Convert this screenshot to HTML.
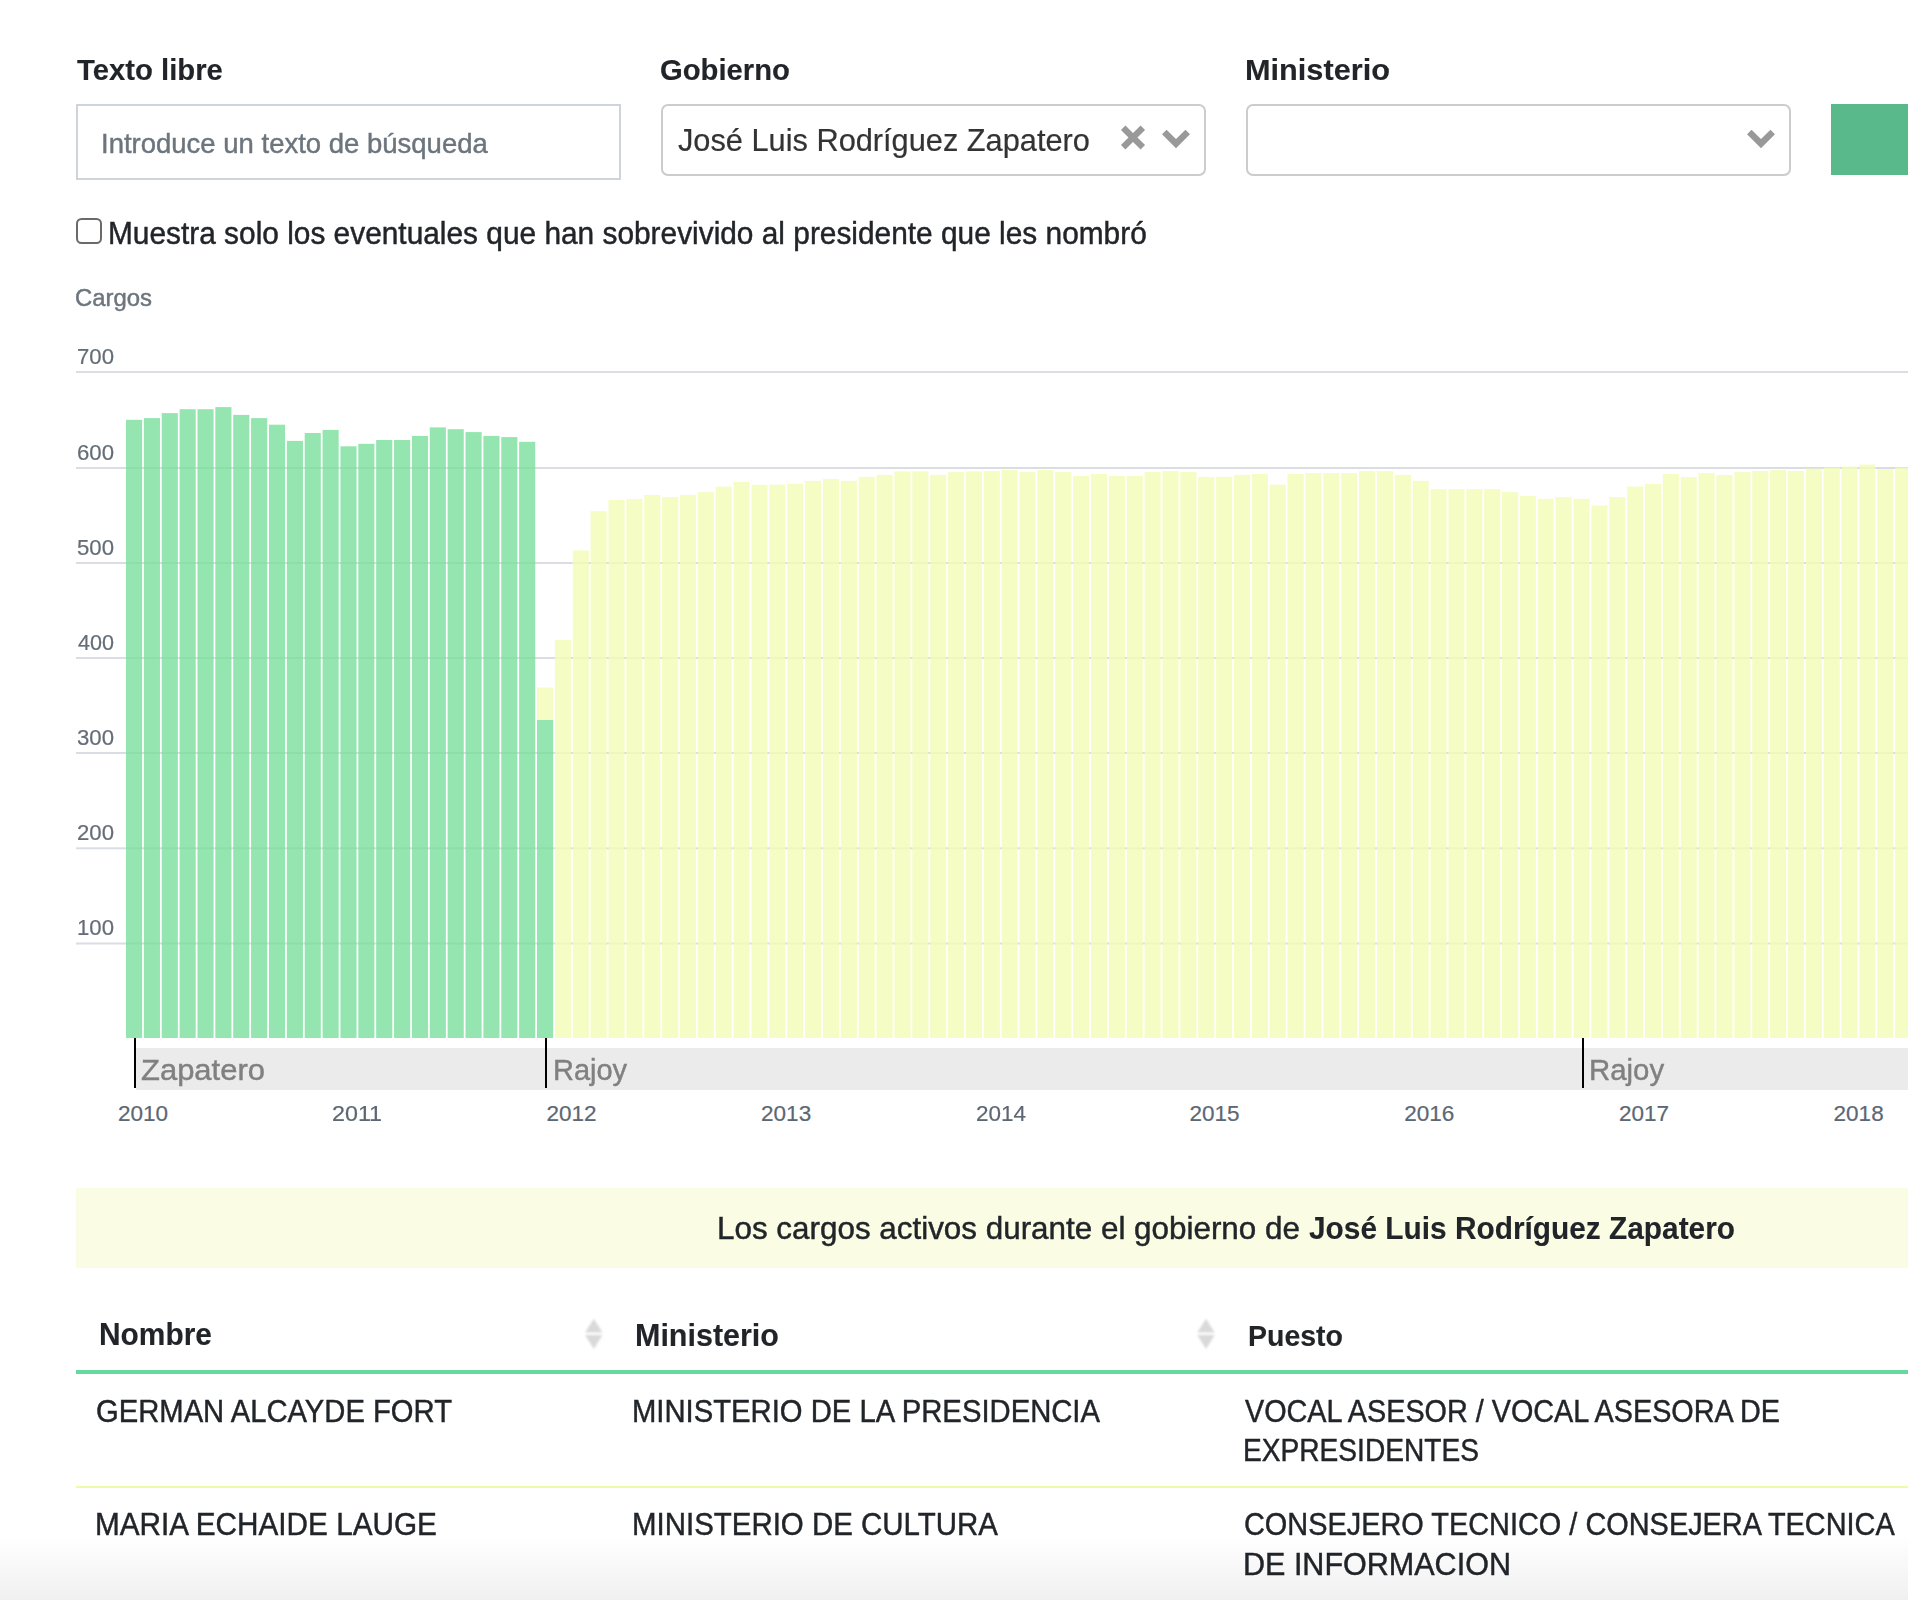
<!DOCTYPE html>
<html><head><meta charset="utf-8">
<style>
html,body{margin:0;padding:0;background:#fff;}
body{width:1908px;height:1600px;overflow:hidden;position:relative;font-family:"Liberation Sans",sans-serif;color:#212529;}
.t{position:absolute;white-space:nowrap;line-height:1;transform-origin:0 0;}
.box{position:absolute;box-sizing:border-box;}
.mk{position:absolute;top:1038px;width:2px;height:50px;background:#000;}
</style></head><body>

<div class="box" style="left:76px;top:104px;width:545px;height:76px;border:2px solid #ced4da;"></div>

<div class="box" style="left:661px;top:104px;width:545px;height:72px;border:2px solid #cccccc;border-radius:7px;"></div>
<svg class="box" style="left:0;top:0" width="1908" height="200"><path d="M1123.2 127.7 L1142.8 147.3 M1142.8 127.7 L1123.2 147.3" stroke="#999" stroke-width="6.3"/><path d="M1164.3 131.9 L1176 143.6 L1187.7 131.9" stroke="#999" stroke-width="6.4" fill="none" stroke-linejoin="miter"/><path d="M1749.3 131.9 L1761 143.6 L1772.7 131.9" stroke="#999" stroke-width="6.4" fill="none" stroke-linejoin="miter"/></svg>

<div class="box" style="left:1246px;top:104px;width:545px;height:72px;border:2px solid #cccccc;border-radius:7px;"></div>


<div class="box" style="left:1831px;top:104px;width:77px;height:71px;background:#5ab98b;"></div>

<div class="box" style="left:76px;top:218px;width:26px;height:26px;border:2px solid #6a6a6a;border-radius:5.5px;"></div>

<svg class="box" style="left:0;top:0" width="1908" height="1100">
<rect x="76" y="371.0" width="1832" height="2" fill="#dadee4"/><rect x="76" y="467.0" width="1832" height="2" fill="#dadee4"/><rect x="76" y="562.0" width="1832" height="2" fill="#dadee4"/><rect x="76" y="657.0" width="1832" height="2" fill="#dadee4"/><rect x="76" y="752.0" width="1832" height="2" fill="#dadee4"/><rect x="76" y="847.3" width="1832" height="2" fill="#dadee4"/><rect x="76" y="942.5" width="1832" height="2" fill="#dadee4"/>
<rect x="126.00" y="419.8" width="16.10" height="618.2" fill="rgba(121,223,155,0.8)"/><rect x="143.87" y="418.1" width="16.10" height="619.9" fill="rgba(121,223,155,0.8)"/><rect x="161.74" y="413.1" width="16.10" height="624.9" fill="rgba(121,223,155,0.8)"/><rect x="179.61" y="409.2" width="16.10" height="628.8" fill="rgba(121,223,155,0.8)"/><rect x="197.48" y="409.2" width="16.10" height="628.8" fill="rgba(121,223,155,0.8)"/><rect x="215.35" y="407.1" width="16.10" height="630.9" fill="rgba(121,223,155,0.8)"/><rect x="233.22" y="414.9" width="16.10" height="623.1" fill="rgba(121,223,155,0.8)"/><rect x="251.09" y="418.1" width="16.10" height="619.9" fill="rgba(121,223,155,0.8)"/><rect x="268.96" y="424.7" width="16.10" height="613.3" fill="rgba(121,223,155,0.8)"/><rect x="286.83" y="440.9" width="16.10" height="597.1" fill="rgba(121,223,155,0.8)"/><rect x="304.70" y="433.0" width="16.10" height="605.0" fill="rgba(121,223,155,0.8)"/><rect x="322.57" y="429.9" width="16.10" height="608.1" fill="rgba(121,223,155,0.8)"/><rect x="340.44" y="446.3" width="16.10" height="591.7" fill="rgba(121,223,155,0.8)"/><rect x="358.31" y="443.8" width="16.10" height="594.2" fill="rgba(121,223,155,0.8)"/><rect x="376.18" y="440.0" width="16.10" height="598.0" fill="rgba(121,223,155,0.8)"/><rect x="394.05" y="440.0" width="16.10" height="598.0" fill="rgba(121,223,155,0.8)"/><rect x="411.92" y="435.9" width="16.10" height="602.1" fill="rgba(121,223,155,0.8)"/><rect x="429.79" y="427.4" width="16.10" height="610.6" fill="rgba(121,223,155,0.8)"/><rect x="447.66" y="429.2" width="16.10" height="608.8" fill="rgba(121,223,155,0.8)"/><rect x="465.53" y="432.1" width="16.10" height="605.9" fill="rgba(121,223,155,0.8)"/><rect x="483.40" y="435.9" width="16.10" height="602.1" fill="rgba(121,223,155,0.8)"/><rect x="501.27" y="437.1" width="16.10" height="600.9" fill="rgba(121,223,155,0.8)"/><rect x="519.14" y="441.8" width="16.10" height="596.2" fill="rgba(121,223,155,0.8)"/><rect x="537.01" y="687.5" width="16.10" height="32.5" fill="rgba(242,253,182,0.8)"/><rect x="537.01" y="720.0" width="16.10" height="318.0" fill="rgba(121,223,155,0.8)"/><rect x="554.88" y="640.0" width="16.10" height="398.0" fill="rgba(242,253,182,0.8)"/><rect x="572.75" y="550.4" width="16.10" height="487.6" fill="rgba(242,253,182,0.8)"/><rect x="590.62" y="511.2" width="16.10" height="526.8" fill="rgba(242,253,182,0.8)"/><rect x="608.49" y="500.0" width="16.10" height="538.0" fill="rgba(242,253,182,0.8)"/><rect x="626.36" y="499.1" width="16.10" height="538.9" fill="rgba(242,253,182,0.8)"/><rect x="644.23" y="495.0" width="16.10" height="543.0" fill="rgba(242,253,182,0.8)"/><rect x="662.10" y="497.1" width="16.10" height="540.9" fill="rgba(242,253,182,0.8)"/><rect x="679.97" y="495.0" width="16.10" height="543.0" fill="rgba(242,253,182,0.8)"/><rect x="697.84" y="492.1" width="16.10" height="545.9" fill="rgba(242,253,182,0.8)"/><rect x="715.71" y="486.7" width="16.10" height="551.3" fill="rgba(242,253,182,0.8)"/><rect x="733.58" y="481.9" width="16.10" height="556.1" fill="rgba(242,253,182,0.8)"/><rect x="751.45" y="484.8" width="16.10" height="553.2" fill="rgba(242,253,182,0.8)"/><rect x="769.32" y="484.7" width="16.10" height="553.3" fill="rgba(242,253,182,0.8)"/><rect x="787.19" y="483.8" width="16.10" height="554.2" fill="rgba(242,253,182,0.8)"/><rect x="805.06" y="480.9" width="16.10" height="557.1" fill="rgba(242,253,182,0.8)"/><rect x="822.93" y="479.0" width="16.10" height="559.0" fill="rgba(242,253,182,0.8)"/><rect x="840.80" y="480.9" width="16.10" height="557.1" fill="rgba(242,253,182,0.8)"/><rect x="858.67" y="476.9" width="16.10" height="561.1" fill="rgba(242,253,182,0.8)"/><rect x="876.54" y="474.9" width="16.10" height="563.1" fill="rgba(242,253,182,0.8)"/><rect x="894.41" y="471.4" width="16.10" height="566.6" fill="rgba(242,253,182,0.8)"/><rect x="912.28" y="471.4" width="16.10" height="566.6" fill="rgba(242,253,182,0.8)"/><rect x="930.15" y="474.9" width="16.10" height="563.1" fill="rgba(242,253,182,0.8)"/><rect x="948.02" y="472.1" width="16.10" height="565.9" fill="rgba(242,253,182,0.8)"/><rect x="965.89" y="471.4" width="16.10" height="566.6" fill="rgba(242,253,182,0.8)"/><rect x="983.76" y="471.1" width="16.10" height="566.9" fill="rgba(242,253,182,0.8)"/><rect x="1001.63" y="470.0" width="16.10" height="568.0" fill="rgba(242,253,182,0.8)"/><rect x="1019.50" y="472.1" width="16.10" height="565.9" fill="rgba(242,253,182,0.8)"/><rect x="1037.37" y="470.0" width="16.10" height="568.0" fill="rgba(242,253,182,0.8)"/><rect x="1055.24" y="472.1" width="16.10" height="565.9" fill="rgba(242,253,182,0.8)"/><rect x="1073.11" y="476.0" width="16.10" height="562.0" fill="rgba(242,253,182,0.8)"/><rect x="1090.98" y="474.0" width="16.10" height="564.0" fill="rgba(242,253,182,0.8)"/><rect x="1108.85" y="476.0" width="16.10" height="562.0" fill="rgba(242,253,182,0.8)"/><rect x="1126.72" y="476.0" width="16.10" height="562.0" fill="rgba(242,253,182,0.8)"/><rect x="1144.59" y="472.1" width="16.10" height="565.9" fill="rgba(242,253,182,0.8)"/><rect x="1162.46" y="471.1" width="16.10" height="566.9" fill="rgba(242,253,182,0.8)"/><rect x="1180.33" y="472.1" width="16.10" height="565.9" fill="rgba(242,253,182,0.8)"/><rect x="1198.20" y="476.9" width="16.10" height="561.1" fill="rgba(242,253,182,0.8)"/><rect x="1216.07" y="476.9" width="16.10" height="561.1" fill="rgba(242,253,182,0.8)"/><rect x="1233.94" y="474.9" width="16.10" height="563.1" fill="rgba(242,253,182,0.8)"/><rect x="1251.81" y="474.0" width="16.10" height="564.0" fill="rgba(242,253,182,0.8)"/><rect x="1269.68" y="484.7" width="16.10" height="553.3" fill="rgba(242,253,182,0.8)"/><rect x="1287.55" y="474.0" width="16.10" height="564.0" fill="rgba(242,253,182,0.8)"/><rect x="1305.42" y="473.1" width="16.10" height="564.9" fill="rgba(242,253,182,0.8)"/><rect x="1323.29" y="473.1" width="16.10" height="564.9" fill="rgba(242,253,182,0.8)"/><rect x="1341.16" y="473.1" width="16.10" height="564.9" fill="rgba(242,253,182,0.8)"/><rect x="1359.03" y="471.1" width="16.10" height="566.9" fill="rgba(242,253,182,0.8)"/><rect x="1376.90" y="471.1" width="16.10" height="566.9" fill="rgba(242,253,182,0.8)"/><rect x="1394.77" y="474.9" width="16.10" height="563.1" fill="rgba(242,253,182,0.8)"/><rect x="1412.64" y="480.9" width="16.10" height="557.1" fill="rgba(242,253,182,0.8)"/><rect x="1430.51" y="489.2" width="16.10" height="548.8" fill="rgba(242,253,182,0.8)"/><rect x="1448.38" y="489.2" width="16.10" height="548.8" fill="rgba(242,253,182,0.8)"/><rect x="1466.25" y="489.2" width="16.10" height="548.8" fill="rgba(242,253,182,0.8)"/><rect x="1484.12" y="489.2" width="16.10" height="548.8" fill="rgba(242,253,182,0.8)"/><rect x="1501.99" y="492.1" width="16.10" height="545.9" fill="rgba(242,253,182,0.8)"/><rect x="1519.86" y="495.9" width="16.10" height="542.1" fill="rgba(242,253,182,0.8)"/><rect x="1537.73" y="498.9" width="16.10" height="539.1" fill="rgba(242,253,182,0.8)"/><rect x="1555.60" y="497.1" width="16.10" height="540.9" fill="rgba(242,253,182,0.8)"/><rect x="1573.47" y="498.9" width="16.10" height="539.1" fill="rgba(242,253,182,0.8)"/><rect x="1591.34" y="505.5" width="16.10" height="532.5" fill="rgba(242,253,182,0.8)"/><rect x="1609.21" y="497.1" width="16.10" height="540.9" fill="rgba(242,253,182,0.8)"/><rect x="1627.08" y="486.6" width="16.10" height="551.4" fill="rgba(242,253,182,0.8)"/><rect x="1644.95" y="483.9" width="16.10" height="554.1" fill="rgba(242,253,182,0.8)"/><rect x="1662.82" y="474.0" width="16.10" height="564.0" fill="rgba(242,253,182,0.8)"/><rect x="1680.69" y="477.0" width="16.10" height="561.0" fill="rgba(242,253,182,0.8)"/><rect x="1698.56" y="473.1" width="16.10" height="564.9" fill="rgba(242,253,182,0.8)"/><rect x="1716.43" y="475.0" width="16.10" height="563.0" fill="rgba(242,253,182,0.8)"/><rect x="1734.30" y="472.1" width="16.10" height="565.9" fill="rgba(242,253,182,0.8)"/><rect x="1752.17" y="471.0" width="16.10" height="567.0" fill="rgba(242,253,182,0.8)"/><rect x="1770.04" y="470.1" width="16.10" height="567.9" fill="rgba(242,253,182,0.8)"/><rect x="1787.91" y="471.0" width="16.10" height="567.0" fill="rgba(242,253,182,0.8)"/><rect x="1805.78" y="468.6" width="16.10" height="569.4" fill="rgba(242,253,182,0.8)"/><rect x="1823.65" y="467.6" width="16.10" height="570.4" fill="rgba(242,253,182,0.8)"/><rect x="1841.52" y="466.6" width="16.10" height="571.4" fill="rgba(242,253,182,0.8)"/><rect x="1859.39" y="464.6" width="16.10" height="573.4" fill="rgba(242,253,182,0.8)"/><rect x="1877.26" y="469.1" width="16.10" height="568.9" fill="rgba(242,253,182,0.8)"/><rect x="1895.13" y="467.6" width="12.87" height="570.4" fill="rgba(242,253,182,0.8)"/>
</svg>

<div class="box" style="left:136px;top:1048px;width:1772px;height:41.8px;background:#ebebeb;"></div>
<div class="mk" style="left:134px"></div>
<div class="mk" style="left:545px"></div>
<div class="mk" style="left:1582px"></div>

<div class="box" style="left:76px;top:1188px;width:1832px;height:79.5px;background:#fafde3;"></div>

<svg class="box" style="left:0;top:1300px" width="1908" height="60"><defs><filter id="bl" x="-50%" y="-50%" width="200%" height="200%"><feGaussianBlur stdDeviation="1.1"/></filter></defs><g filter="url(#bl)" fill="#d9d9d9"><path d="M593.8 18.8 L602.5 32.6 L585.1 32.6 Z"/><path d="M585.1 35 L602.5 35 L593.8 49 Z"/><path d="M1206 18.8 L1214.7 32.6 L1197.3 32.6 Z"/><path d="M1197.3 35 L1214.7 35 L1206 49 Z"/></g></svg>
<div class="box" style="left:76px;top:1370px;width:1832px;height:3.8px;background:#66d9a0;"></div>
<div class="box" style="left:76px;top:1486px;width:1832px;height:2px;background:#eefaa6;"></div>

<div class="t" style="left:77.0px;top:54.67px;font-size:29.92px;transform:scaleX(0.9789);font-weight:bold;color:#212529;-webkit-text-stroke:0.12px currentColor;">Texto libre</div>
<div class="t" style="left:660.0px;top:54.67px;font-size:29.92px;transform:scaleX(0.9777);font-weight:bold;color:#212529;-webkit-text-stroke:0.12px currentColor;">Gobierno</div>
<div class="t" style="left:1245.0px;top:54.67px;font-size:29.92px;transform:scaleX(1.026);font-weight:bold;color:#212529;-webkit-text-stroke:0.12px currentColor;">Ministerio</div>
<div class="t" style="left:101.0px;top:129.81px;font-size:27.74px;transform:scaleX(0.9914);color:#6c757d;-webkit-text-stroke:0.45px currentColor;">Introduce un texto de búsqueda</div>
<div class="t" style="left:678.0px;top:126.01px;font-size:30.7px;transform:scaleX(1.0019);color:#333333;-webkit-text-stroke:0.2px currentColor;">José Luis Rodríguez Zapatero</div>
<div class="t" style="left:108.0px;top:217.75px;font-size:31.01px;transform:scaleX(0.9629);color:#212529;-webkit-text-stroke:0.45px currentColor;">Muestra solo los eventuales que han sobrevivido al presidente que les nombró</div>
<div class="t" style="left:75.0px;top:286.34px;font-size:23.94px;transform:scaleX(0.9981);color:#6c757d;-webkit-text-stroke:0.45px currentColor;">Cargos</div>
<div class="t" style="left:77.0px;top:345.88px;font-size:22px;transform:scaleX(1.0082);color:#646d77;-webkit-text-stroke:0.2px currentColor;">700</div>
<div class="t" style="left:77.0px;top:441.88px;font-size:22px;transform:scaleX(1.0082);color:#646d77;-webkit-text-stroke:0.2px currentColor;">600</div>
<div class="t" style="left:77.0px;top:536.88px;font-size:22px;transform:scaleX(1.0082);color:#646d77;-webkit-text-stroke:0.2px currentColor;">500</div>
<div class="t" style="left:78.0px;top:631.88px;font-size:22px;transform:scaleX(0.9802);color:#646d77;-webkit-text-stroke:0.2px currentColor;">400</div>
<div class="t" style="left:77.0px;top:726.88px;font-size:22px;transform:scaleX(1.0082);color:#646d77;-webkit-text-stroke:0.2px currentColor;">300</div>
<div class="t" style="left:77.0px;top:822.18px;font-size:22px;transform:scaleX(1.0082);color:#646d77;-webkit-text-stroke:0.2px currentColor;">200</div>
<div class="t" style="left:77.0px;top:917.38px;font-size:22px;transform:scaleX(1.0082);color:#646d77;-webkit-text-stroke:0.2px currentColor;">100</div>
<div class="t" style="left:118.0px;top:1103.15px;font-size:22.5px;transform:scaleX(1.0);color:#5c6773;-webkit-text-stroke:0.2px currentColor;">2010</div>
<div class="t" style="left:331.7px;top:1103.15px;font-size:22.5px;transform:scaleX(1.0348);color:#5c6773;-webkit-text-stroke:0.2px currentColor;">2011</div>
<div class="t" style="left:546.4px;top:1103.15px;font-size:22.5px;transform:scaleX(1.0);color:#5c6773;-webkit-text-stroke:0.2px currentColor;">2012</div>
<div class="t" style="left:761.1px;top:1103.15px;font-size:22.5px;transform:scaleX(1.0);color:#5c6773;-webkit-text-stroke:0.2px currentColor;">2013</div>
<div class="t" style="left:975.8px;top:1103.15px;font-size:22.5px;transform:scaleX(0.9995);color:#5c6773;-webkit-text-stroke:0.2px currentColor;">2014</div>
<div class="t" style="left:1189.5px;top:1103.15px;font-size:22.5px;transform:scaleX(1.0);color:#5c6773;-webkit-text-stroke:0.2px currentColor;">2015</div>
<div class="t" style="left:1404.2px;top:1103.15px;font-size:22.5px;transform:scaleX(1.0);color:#5c6773;-webkit-text-stroke:0.2px currentColor;">2016</div>
<div class="t" style="left:1618.9px;top:1103.15px;font-size:22.5px;transform:scaleX(1.0);color:#5c6773;-webkit-text-stroke:0.2px currentColor;">2017</div>
<div class="t" style="left:1833.6px;top:1103.15px;font-size:22.5px;transform:scaleX(1.0);color:#5c6773;-webkit-text-stroke:0.2px currentColor;">2018</div>
<div class="t" style="left:141.0px;top:1054.7px;font-size:29.65px;transform:scaleX(1.0446);color:#808080;-webkit-text-stroke:0.45px currentColor;">Zapatero</div>
<div class="t" style="left:553.0px;top:1054.79px;font-size:29.78px;transform:scaleX(0.9734);color:#808080;-webkit-text-stroke:0.45px currentColor;">Rajoy</div>
<div class="t" style="left:1589.0px;top:1054.79px;font-size:29.78px;transform:scaleX(0.9865);color:#808080;-webkit-text-stroke:0.45px currentColor;">Rajoy</div>
<div class="t" style="left:717.0px;top:1213.18px;font-size:31.69px;transform:scaleX(0.9908);color:#212529;-webkit-text-stroke:0.45px currentColor;">Los cargos activos durante el gobierno de</div>
<div class="t" style="left:1309.0px;top:1213.18px;font-size:31.69px;transform:scaleX(0.9414);font-weight:bold;color:#212529;-webkit-text-stroke:0.12px currentColor;">José Luis Rodríguez Zapatero</div>
<div class="t" style="left:99.0px;top:1320.28px;font-size:30.74px;transform:scaleX(0.9731);font-weight:bold;color:#212529;-webkit-text-stroke:0.12px currentColor;">Nombre</div>
<div class="t" style="left:635.0px;top:1320.05px;font-size:31.01px;transform:scaleX(0.9833);font-weight:bold;color:#212529;-webkit-text-stroke:0.12px currentColor;">Ministerio</div>
<div class="t" style="left:1248.0px;top:1320.63px;font-size:30.33px;transform:scaleX(0.9396);font-weight:bold;color:#212529;-webkit-text-stroke:0.12px currentColor;">Puesto</div>
<div class="t" style="left:96.0px;top:1395.53px;font-size:31.86px;transform:scaleX(0.9168);color:#212529;-webkit-text-stroke:0.45px currentColor;">GERMAN ALCAYDE FORT</div>
<div class="t" style="left:632.0px;top:1395.53px;font-size:31.86px;transform:scaleX(0.9179);color:#212529;-webkit-text-stroke:0.45px currentColor;">MINISTERIO DE LA PRESIDENCIA</div>
<div class="t" style="left:1245.0px;top:1395.53px;font-size:31.86px;transform:scaleX(0.9029);color:#212529;-webkit-text-stroke:0.45px currentColor;">VOCAL ASESOR / VOCAL ASESORA DE</div>
<div class="t" style="left:1243.0px;top:1435.05px;font-size:31.71px;transform:scaleX(0.887);color:#212529;-webkit-text-stroke:0.45px currentColor;">EXPRESIDENTES</div>
<div class="t" style="left:95.0px;top:1509.27px;font-size:31.57px;transform:scaleX(0.9417);color:#212529;-webkit-text-stroke:0.45px currentColor;">MARIA ECHAIDE LAUGE</div>
<div class="t" style="left:632.0px;top:1509.27px;font-size:31.57px;transform:scaleX(0.9327);color:#212529;-webkit-text-stroke:0.45px currentColor;">MINISTERIO DE CULTURA</div>
<div class="t" style="left:1244.0px;top:1509.27px;font-size:31.57px;transform:scaleX(0.9154);color:#212529;-webkit-text-stroke:0.45px currentColor;">CONSEJERO TECNICO / CONSEJERA TECNICA</div>
<div class="t" style="left:1243.0px;top:1548.8px;font-size:31.43px;transform:scaleX(0.9714);color:#212529;-webkit-text-stroke:0.45px currentColor;">DE INFORMACION</div>

<div class="box" style="left:0;top:1535px;width:1908px;height:65px;background:linear-gradient(to bottom, rgba(0,0,0,0), rgba(0,0,0,0.058));"></div>
</body></html>
